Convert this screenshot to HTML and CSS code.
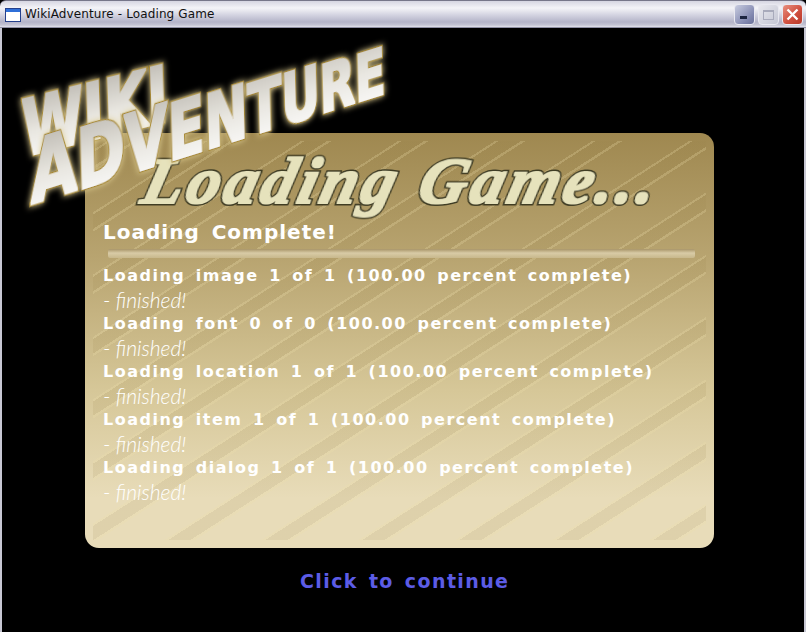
FILE: index.html
```html
<!DOCTYPE html>
<html lang="en">
<head>
    <meta charset="UTF-8">
    <title>WikiAdventure - Loading Game</title>
    <link rel="stylesheet" href="styles.css">
</head>
<body>
    <div class="window">
        <!-- Title bar -->
        <div class="titlebar">
            <svg class="app-icon" width="16" height="14" viewBox="0 0 16 14">
                <rect x="0.5" y="0.5" width="15" height="13" fill="#fff" stroke="#24408c"/>
                <rect x="1" y="1" width="14" height="3" fill="#2f6fd8"/>
            </svg>
            <span class="title-text">WikiAdventure - Loading Game</span>
            <div class="win-btns">
                <div class="win-btn min-btn"><span class="min-mark"></span></div>
                <div class="win-btn max-btn"><span class="max-mark"></span></div>
                <div class="win-btn close-btn">
                    <svg width="13" height="13" viewBox="0 0 13 13">
                        <path d="M1.5 1.5 L11.5 11.5 M11.5 1.5 L1.5 11.5" stroke="#fff" stroke-width="2.4" fill="none"/>
                    </svg>
                </div>
            </div>
        </div>

        <!-- Game area -->
        <div class="game">
            <div class="panel">
                <h1 class="panel-title">
                    <svg class="script-svg" width="629" height="92" viewBox="0 0 629 92">
                        <text transform="translate(54 70) skewX(-14)" class="script-text">Loading Game...</text>
                    </svg>
                </h1>
                <div class="status">Loading Complete!</div>
                <div class="divider"></div>
                <div class="step">Loading image 1 of 1 (100.00 percent complete)</div>
                <div class="done">- finished!</div>
                <div class="step">Loading font 0 of 0 (100.00 percent complete)</div>
                <div class="done">- finished!</div>
                <div class="step">Loading location 1 of 1 (100.00 percent complete)</div>
                <div class="done">- finished!</div>
                <div class="step">Loading item 1 of 1 (100.00 percent complete)</div>
                <div class="done">- finished!</div>
                <div class="step">Loading dialog 1 of 1 (100.00 percent complete)</div>
                <div class="done">- finished!</div>
            </div>
            <div class="continue">Click to continue</div>

            <!-- Logo sits over the panel corner -->
            <svg class="logo" width="400" height="190" viewBox="0 0 400 190">
                <defs>
                    <linearGradient id="logoFill" x1="0" y1="0" x2="0" y2="1">
                        <stop offset="0" stop-color="#b4b0a8"/>
                        <stop offset="0.55" stop-color="#e8e6e0"/>
                        <stop offset="1" stop-color="#ffffff"/>
                    </linearGradient>
                    <filter id="fatten" x="-10%" y="-20%" width="120%" height="140%">
                        <feMorphology operator="dilate" radius="1.2"/>
                    </filter>
                    <filter id="fattenThin" x="-5%" y="-20%" width="110%" height="140%">
                        <feMorphology operator="dilate" radius="0.6"/>
                    </filter>
                </defs>
                <text class="logo-word" transform="translate(23 119) rotate(-14) skewX(-12)" font-size="76" textLength="150" lengthAdjust="spacingAndGlyphs">WIKI</text>
                <text class="logo-word" transform="translate(31 167) rotate(-17.5) skewX(-16)" textLength="372" lengthAdjust="spacingAndGlyphs"><tspan font-size="84">A</tspan><tspan font-size="81">D</tspan><tspan font-size="78">V</tspan><tspan font-size="75">E</tspan><tspan font-size="72">N</tspan><tspan font-size="69">T</tspan><tspan font-size="66">U</tspan><tspan font-size="64">R</tspan><tspan font-size="62">E</tspan></text>
            </svg>
        </div>
    </div>
</body>
</html>
```

FILE: styles.css
```css
/* Basic Styles */
html, body {
    margin: 0;
    padding: 0;
    background: #000;
}

.window {
    width: 806px;
    height: 632px;
    display: flex;
    flex-direction: column;
    overflow: hidden;
}

/* Title Bar */
.titlebar {
    height: 28px;
    box-sizing: border-box;
    display: flex;
    align-items: center;
    padding: 1px 3px 0 5px;
    border-radius: 6px 6px 0 0;
    border-top: 1px solid #77778a;
    border-bottom: 1px solid #8f8fa3;
    background: linear-gradient(to bottom, #d6d6e2 0, #f4f4f8 7px, #d8d8e4 13px, #b4b4c8 21px, #c4c4d4 24px, #f2f2f6 27px);
}

.app-icon {
    margin-right: 4px;
}

.title-text {
    font-family: "DejaVu Sans", sans-serif;
    font-size: 12px;
    letter-spacing: 0.12px;
    color: #111;
    margin-top: -1px;
}

.win-btns {
    margin-left: auto;
    display: flex;
    gap: 3px;
}

.win-btn {
    width: 21px;
    height: 21px;
    box-sizing: border-box;
    border: 1px solid #e8e8f0;
    border-radius: 4px;
    display: flex;
    align-items: center;
    justify-content: center;
    position: relative;
}

.min-btn {
    background: linear-gradient(135deg, #c8cce0, #8288b0 70%, #6a7098);
}

.min-mark {
    width: 7px;
    height: 3px;
    background: #1c2440;
    margin-top: 6px;
    margin-right: 3px;
}

.max-btn {
    background: linear-gradient(135deg, #e8e8ee, #c4c6d4);
}

.max-mark {
    width: 11px;
    height: 10px;
    box-sizing: border-box;
    border: 1px solid #a8aabb;
    border-top-width: 2px;
}

.close-btn {
    background: linear-gradient(135deg, #e89080, #d05040 55%, #b83828);
}

/* Game Area */
.game {
    position: relative;
    flex: 1;
    background: #000;
    border-left: 2px solid #c8c8d4;
    border-right: 2px solid #c8c8d4;
    display: flex;
    flex-direction: column;
    align-items: flex-start;
    padding-top: 105px;
}

/* Panel */
.panel {
    position: relative;
    width: 629px;
    height: 415px;
    box-sizing: border-box;
    margin-left: 83px;
    padding: 0 18px;
    border-radius: 14px;
    background: linear-gradient(to bottom, #9f8850 0, #b8a470 30%, #d6c798 62%, #e8dcb9 88%, #e8dcb9 100%);
    overflow: hidden;
}

/* Diagonal stripes behind the text */
.panel::before {
    content: "";
    position: absolute;
    top: 8px;
    left: 8px;
    right: 8px;
    bottom: 8px;
    background: repeating-linear-gradient(147.3deg,
        transparent 0, transparent 7.6px,
        rgba(236, 222, 170, 0.24) 7.6px, rgba(236, 222, 170, 0.24) 9.6px,
        rgba(150, 128, 70, 0.12) 9.6px, rgba(150, 128, 70, 0.12) 21.6px,
        rgba(236, 222, 170, 0.24) 21.6px, rgba(236, 222, 170, 0.24) 24px,
        transparent 24px, transparent 52.4px);
}

.panel > * {
    position: relative;
}

.panel-title {
    margin: 0 -18px;
    height: 84px;
}

.script-svg {
    display: block;
}

.script-text {
    font-family: "Liberation Serif", serif;
    font-style: italic;
    font-weight: bold;
    font-size: 66px;
    letter-spacing: 4.1px;
    fill: #e6e2bc;
    stroke: #3c3a24;
    stroke-width: 3px;
    paint-order: stroke;
    filter: url(#fattenThin);
}

.status {
    font-family: "DejaVu Sans", sans-serif;
    font-weight: bold;
    font-size: 20px;
    letter-spacing: 1px;
    word-spacing: 4px;
    line-height: 30px;
    color: #fff;
}

.divider {
    height: 9px;
    margin: 2px 1px 6px 5px;
    border-radius: 2px;
    background: linear-gradient(to bottom, #a89468, #d8cba6 45%, #c8b88c);
}

.step {
    font-family: "DejaVu Sans", sans-serif;
    font-weight: bold;
    font-size: 16px;
    letter-spacing: 1.5px;
    word-spacing: 3.5px;
    line-height: 24px;
    color: #fff;
    white-space: nowrap;
}

.done {
    font-family: "Lato", sans-serif;
    font-style: italic;
    font-weight: 300;
    font-size: 21px;
    line-height: 24px;
    color: #fff;
}

/* Continue link */
.continue {
    margin: 20px 0 0 298px;
    font-family: "DejaVu Sans", sans-serif;
    font-weight: bold;
    font-size: 19px;
    letter-spacing: 1.4px;
    word-spacing: 3px;
    line-height: 26px;
    color: #5c5ce6;
}

/* Logo */
.logo {
    position: absolute;
    top: 10px;
    left: -2px;
    overflow: visible;
}

.logo-word {
    font-family: "DejaVu Sans", sans-serif;
    font-weight: bold;
    fill: url(#logoFill);
    stroke: #a88a30;
    stroke-width: 2.5px;
    paint-order: stroke;
    filter: url(#fatten) drop-shadow(0 0 3px #b89a48);
}
```
